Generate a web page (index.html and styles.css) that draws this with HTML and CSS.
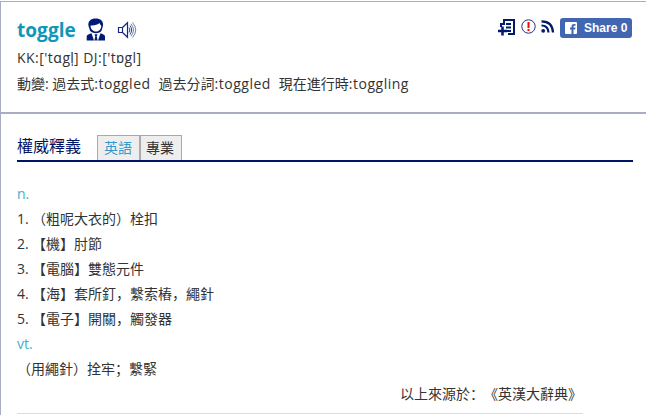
FILE: index.html
```html
<!DOCTYPE html>
<html lang="zh-Hans">
<head>
<meta charset="utf-8">
<title>toggle</title>
<link rel="stylesheet" href="styles.css">
</head>
<body>
<main class="card">
  <section class="head">
    <div class="title-row">
      <h1 class="word">toggle</h1>
      <svg class="person" width="20" height="23" viewBox="0 0 20 23">
        <path d="M2.5 8C1.5 3 5 .5 9.5 .5C14.5 .5 18 3 16.8 8.500L15.500 12.500C14 16 6 16 4 12.500Z" fill="#001a75"/>
        <path d="M4.500 7.500C8 8 12 6.500 13.500 5C14 6.500 15 7 15.300 8C15 12 12.500 13.500 10 13.500C7 13.500 4.500 11 4.500 7.500Z" fill="#fff"/>
        <path d="M.7 22.500V18.500Q.7 16.500 5.500 15.300L8 22.500ZM19 22.500V18.500Q19 16.500 14.500 15.300L12 22.500ZM8.500 16.300h3l-.8 2 .9 4.200h-3.200l.9-4.200Z" fill="#001a75"/>
      </svg>
      <svg class="speaker" width="20" height="18" viewBox="0 0 20 18" fill="none" stroke="#17277d">
        <path d="M5.500 6.500H1.500V11.500H5.500ZM5.500 6.500L10.500 1.700V16.300L5.500 11.500" stroke-width="1.200"/>
        <path d="M12 6.500Q13.800 9 12 11.500M13 4.500Q16.300 9 13 13.500" stroke-width=".9"/>
        <path d="M14 2.800Q19 9 14 15.200M15.500 1.500Q22 9 15.500 16.500" stroke-width=".6"/>
      </svg>
      <div class="tools">
        <svg class="add" width="17" height="17" viewBox="0 0 17 17" fill="none" stroke="#001a70" stroke-width="2">
          <path d="M3 8V5H6V1H16V15H10M8 5H13M8 8.500H13M9 12H13"/>
          <path d="M0 12H9M4.500 7.500V16.500" stroke-width="2.500"/>
        </svg>
        <svg class="alert" width="15" height="15" viewBox="0 0 15 15">
          <circle cx="7.500" cy="7.500" r="6.700" fill="#fff" stroke="#24347f"/>
          <path d="M6.500 3h2v6h-2zM6.500 10h2v2h-2z" fill="#f00"/>
        </svg>
        <svg class="rss" width="14" height="13" viewBox="0 0 14 13" fill="none" stroke="#001a66">
          <circle cx="2.200" cy="10.800" r="1.900" fill="#001a66" stroke="none"/>
          <path d="M.5 5.500Q7 5.500 7.500 12.500M.5 1.300Q11.500 1.300 12 12.500" stroke-width="2.200"/>
        </svg>
        <a class="share">
          <svg width="12" height="12" viewBox="0 0 12 12"><rect width="12" height="12" rx="1" fill="#fff"/><path d="M6.500 12V7.500H5V5.500H6.500V4.300Q6.500 2 9 2H10.500V3.800H9.300Q8.500 3.800 8.500 4.600V5.500H10.500L10.200 7.500H8.500V12Z" fill="#4267b2"/></svg>
          <span>Share 0</span>
        </a>
      </div>
    </div>
    <p class="line phon">KK:['tɑgl̩] DJ:['tɒgl]</p>
    <p class="line forms"><span>動變: 過去式<span class="en">:toggled</span></span><span>過去分詞<span class="en">:toggled</span></span><span>現在進行時<span class="en">:toggling</span></span></p>
  </section>
  <section class="body">
    <div class="tabs">
      <h2>權威釋義</h2>
      <div class="tab active">英語</div>
      <div class="tab">專業</div>
    </div>
    <div class="defs">
      <div class="pos">n.</div>
      <div class="def"><span class="num">1.</span>（粗呢大衣的）栓扣</div>
      <div class="def"><span class="num">2.</span>【機】肘節</div>
      <div class="def"><span class="num">3.</span>【電腦】雙態元件</div>
      <div class="def"><span class="num">4.</span>【海】套所釘，繫索樁，繩針</div>
      <div class="def"><span class="num">5.</span>【電子】開關，觸發器</div>
      <div class="pos">vt.</div>
      <div class="def">（用繩針）拴牢；繫緊</div>
      <div class="source">以上來源於：《英漢大辭典》</div>
    </div>
  </section>
</main>
</body>
</html>
```

FILE: styles.css
```css
* { box-sizing: border-box; }
body { margin: 0; padding-top: 1px; background: #fff; height: 415px; overflow: hidden; color: #333; font: 14px/25px "Open Sans", "Noto Sans CJK SC", sans-serif; text-spacing-trim: space-all; }
h1, h2, p { margin: 0; }
svg { display: block; flex: none; }
.card { height: 414px; border-top: 1px solid #a9adc4; border-left: 1px solid #a9adc4; }
.head { height: 112px; border-bottom: 2px solid #a9adc4; padding: 12px 14px 0 16px; }
.title-row { display: flex; align-items: flex-start; height: 31px; }
.word { width: 59px; font: bold 19px/32px "Open Sans", sans-serif; letter-spacing: .05px; color: #0f96b9; white-space: nowrap; }
.person { margin: 4px 0 0 10px; }
.speaker { margin: 7px 0 0 11px; }
.tools { display: flex; margin-left: auto; padding-top: 4px; }
.add { margin-top: 1px; }
.alert { margin: 1px 0 0 6px; }
.rss { margin: 2px 0 0 5px; }
.share { display: flex; align-items: center; width: 72px; height: 20px; margin-left: 5px; padding-left: 5px; border-radius: 3px; background: #4267b2; color: #fff; font: bold 12px/20px "Liberation Sans", sans-serif; white-space: nowrap; }
.share span { margin-left: 7px; }
.line { height: 26px; line-height: 26px; white-space: nowrap; }
.phon { letter-spacing: .46px; }
.forms { display: flex; gap: 8px; }
.en { letter-spacing: .5px; }
.body { padding: 21px 13px 0 16px; }
.tabs { display: flex; height: 27px; border-bottom: 2px solid #001466; }
h2 { width: 80px; font: 16px/21px "Noto Sans CJK TC", sans-serif; color: #001466; }
.tab { width: 43px; height: 25px; padding-left: 6px; border: 1px solid #aaa; border-bottom: 0; background: #eee; line-height: 24px; }
.tab.active { color: #3399cc; }
.tab + .tab { width: 42px; margin-left: -1px; border-left-width: 2px; padding-left: 5px; }
.tab:last-child { width: 43px; margin-left: -1px; }
.defs { width: 566px; height: 252px; padding-top: 19px; border-bottom: 1px solid #c7e6f2; }
.pos { color: #45afc9; }
.def { white-space: nowrap; }
.num { display: inline-block; width: 15px; }
.source { padding-right: 1px; text-align: right; }
```
